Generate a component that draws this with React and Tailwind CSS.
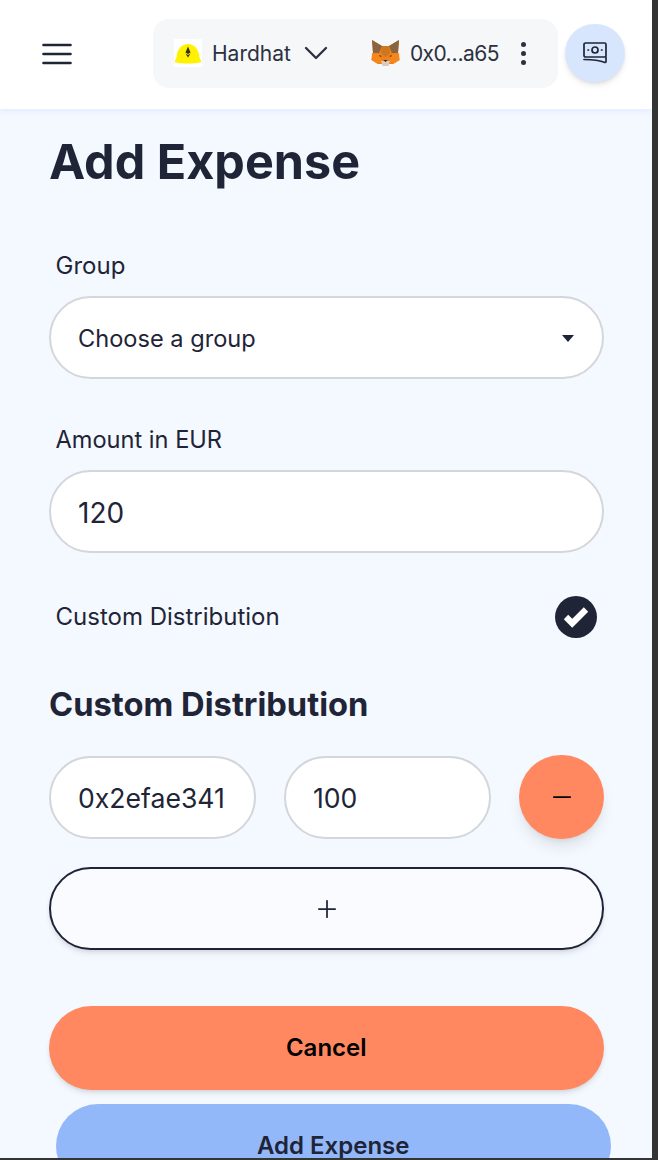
import React from "react";
import { ChevronDown, Check, Minus, Plus } from "lucide-react";

const HardhatLogo = () => (
    <svg width="28" height="28" viewBox="0 0 28 28" className="bg-white">
        <path d="M0.5 23 C0.5 21.5 2 20.5 2.5 18.5 C3 10 8 5 14 5 C20 5 25 10 25.5 18.5 C26 20.5 27.5 21.5 27.5 23 C20 25 8 25 0.5 23 Z" fill="#fff100" />
        <path d="M14 7.5 L16.5 13.5 L14 15 L11.5 13.5 Z" fill="#33331c" />
        <path d="M11.5 14.5 L14 16 L16.5 14.5 L14 18.5 Z" fill="#33331c" />
    </svg>
);

const FoxLogo = () => (
    <svg width="29" height="28" viewBox="0 0 29 28">
        <polygon points="1,1 11,7 18,7 28,1 27,14 28.5,21 22,25 7,25 0.5,21 2,14" fill="#e8821e" />
        <polygon points="1,1 11,7 8,14 2,14" fill="#8a6340" />
        <polygon points="28,1 18,7 21,14 27,14" fill="#8a6340" />
        <polygon points="11,7 18,7 19,14 14.5,18 10,14" fill="#cf7620" />
        <polygon points="1,14 10,15 11,22 7,25 0.5,21" fill="#f6851b" />
        <polygon points="28,14 19,15 18,22 22,25 28.5,21" fill="#f6851b" />
        <polygon points="8,16 11,17 9,18" fill="#5c3a1e" />
        <polygon points="21,16 18,17 20,18" fill="#5c3a1e" />
        <polygon points="10,22 19,22 17.5,27 11.5,27" fill="#dcc9bb" />
        <polygon points="12.5,21 16.5,21 14.5,23" fill="#33261c" />
    </svg>
);

const MoneyIcon = () => (
    <svg width="26" height="24" viewBox="0 0 26 24" fill="none" stroke="#1f2437" strokeWidth="1.7" strokeLinecap="round" strokeLinejoin="round">
        <rect x="2" y="2" width="22" height="14" rx="1.5" />
        <circle cx="13" cy="9" r="3" />
        <path d="M6 9h.5M19.5 9h.5" />
        <path d="M2 18.5c7 0 15 .5 21 3" />
        <path d="M24 16v5" />
    </svg>
);

const MenuIcon = () => (
    <svg width="30" height="22" viewBox="0 0 30 22" stroke="#1f2437" strokeWidth="2.6" strokeLinecap="round">
        <path d="M1.5 2h27M1.5 11h27M1.5 20h27" />
    </svg>
);

const Field = ({ children, className = "" }) => (
    <div className={`h-[83px] bg-white border-2 border-[#d3d6db] rounded-full flex items-center pl-[27px] pt-[2px] text-[#1f2437] ${className}`}>
        {children}
    </div>
);

export default function App() {
    return (
        <div className="w-[658px] h-[1160px] overflow-hidden flex flex-col bg-[#343434] font-['Inter',sans-serif]">
            <div className="flex flex-1 min-h-0">
                <div className="w-[652px] flex flex-col bg-[#f4f8ff]">
                    {/* Navbar */}
                    <div className="h-[109px] shrink-0 bg-white shadow-[0_2px_6px_rgba(147,187,251,0.2)] flex items-center pl-[42px]">
                        <div className="w-[30px] mt-[-2px] flex"><MenuIcon /></div>
                        <div className="ml-[81px] w-[405px] h-[69px] mt-[-3px] rounded-2xl bg-[#f6f7f9] flex items-center pl-[21px] text-[21px] text-[#2c3040]">
                            <HardhatLogo />
                            <span className="ml-[10px] pt-[2px]">Hardhat</span>
                            <ChevronDown size={40} strokeWidth={1.4} className="ml-[5px]" />
                            <div className="ml-[35px] flex"><FoxLogo /></div>
                            <span className="ml-[10px] pt-[2px] tracking-[-0.6px]">0x0…a65</span>
                            <div className="ml-[22px] flex flex-col gap-[4px]">
                                <span className="block w-[5px] h-[5px] rounded-full bg-[#2c3040]" />
                                <span className="block w-[5px] h-[5px] rounded-full bg-[#2c3040]" />
                                <span className="block w-[5px] h-[5px] rounded-full bg-[#2c3040]" />
                            </div>
                        </div>
                        <div className="ml-[7px] w-[60px] h-[58px] mt-[-3px] rounded-full bg-[#d8e6fd] shadow-md flex items-center justify-center">
                            <MoneyIcon />
                        </div>
                    </div>

                    {/* Form */}
                    <div className="px-[49px] flex-1 min-h-0">
                        <h1 className="text-[48.5px] leading-[58px] font-bold text-[#1f2437] mt-[24px]">Add Expense</h1>

                        <div className="text-[24px] leading-[32px] text-[#1f2437] pl-[6.5px] mt-[59px]">Group</div>
                        <Field className="mt-[14px] w-[555px] justify-between pr-[28px] text-[23.6px]">
                            <span>Choose a group</span>
                            <span className="w-0 h-0 border-x-[6px] border-x-transparent border-t-[7px] border-t-[#1f2437]" />
                        </Field>

                        <div className="text-[23.6px] leading-[32px] text-[#1f2437] pl-[6.5px] mt-[45px]">Amount in EUR</div>
                        <Field className="mt-[14px] w-[555px] text-[28px]">120</Field>

                        <div className="flex items-center justify-between w-[555px] pl-[6.5px] pr-[7px] mt-[42px] h-[44px]">
                            <span className="text-[24px] text-[#1f2437]">Custom Distribution</span>
                            <span className="w-[42px] h-[42px] rounded-full bg-[#1f2437] flex items-center justify-center">
                                <Check size={30} strokeWidth={5} strokeLinecap="butt" strokeLinejoin="miter" color="#ffffff" />
                            </span>
                        </div>

                        <h2 className="text-[32.7px] leading-[40px] font-bold text-[#1f2437] mt-[45px]">Custom Distribution</h2>

                        <div className="flex items-center w-[555px] gap-[28.5px] mt-[31px]">
                            <Field className="w-[206.5px] text-[26.6px] pt-[3px]">0x2efae341</Field>
                            <Field className="w-[206.5px] text-[26.6px] pt-[3px]">100</Field>
                            <button className="w-[85px] h-[84px] rounded-full bg-[#ff8860] shadow-lg flex items-center justify-center text-black">
                                <Minus size={28} strokeWidth={1.5} />
                            </button>
                        </div>

                        <button className="mt-[28px] w-[555px] h-[83px] rounded-full border-2 border-[#1f2437] bg-[#f9fbff] shadow-md flex items-center justify-center text-[#1f2437]">
                            <Plus size={28} strokeWidth={1.5} />
                        </button>

                        <button className="mt-[56px] w-[554.5px] h-[84px] rounded-full bg-[#ff8860] shadow-md text-[24px] font-semibold text-black block">Cancel</button>
                        <button className="mt-[14px] ml-[7px] w-[554.5px] h-[84px] rounded-full bg-[#93b8fa] text-[24px] font-semibold text-[#1f2437] block">Add Expense</button>
                    </div>
                </div>
                <div className="w-[6px] bg-[#343434]" />
            </div>
            <div className="h-[2px] shrink-0 bg-[#343434]" />
        </div>
    );
}
